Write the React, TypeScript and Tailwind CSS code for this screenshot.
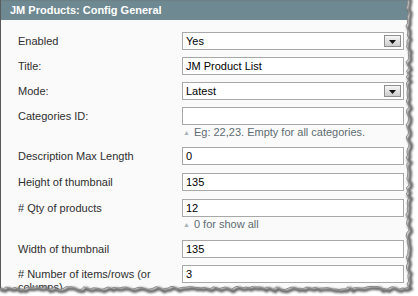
import React from "react";

type Field = {
  label: string;
  value: string;
  select?: boolean;
  hint?: string;
  extra?: string;
};

const FIELDS: Field[] = [
  { label: "Enabled", value: "Yes", select: true },
  { label: "Title:", value: "JM Product List" },
  { label: "Mode:", value: "Latest", select: true },
  { label: "Categories ID:", value: "", hint: "Eg: 22,23. Empty for all categories." },
  { label: "Description Max Length", value: "0" },
  { label: "Height of thumbnail", value: "135", extra: "mt-[1px]" },
  { label: "# Qty of products", value: "12", hint: "0 for show all", extra: "mt-[1px]" },
  { label: "Width of thumbnail", value: "135", extra: "mt-[1px]" },
  { label: "# Number of items/rows (or columns)", value: "3" },
];

// deterministic jitter for the torn paper edge
const rnd = (i: number) => {
  const s = Math.sin(i * 12.9898 + 78.233) * 43758.5453;
  return s - Math.floor(s);
};

function tornEdge() {
  const pts: string[] = [];
  for (let y = -4, i = 0; y <= 287; y += 3, i++) {
    pts.push(`${(407.5 + (rnd(i) - 0.5) * 3.4).toFixed(1)},${y}`);
  }
  for (let x = 405, i = 200; x >= -4; x -= 3, i++) {
    pts.push(`${x},${(288 + (rnd(i) - 0.5) * 3.4).toFixed(1)}`);
  }
  return pts;
}

function SelectArrow() {
  return (
    <div className="absolute right-[2px] top-[2px] w-[17px] h-[12px] border border-[#8f8f8f] bg-gradient-to-b from-[#f7f7f7] to-[#cdcdcd] flex items-end justify-center pb-[2px]">
      <svg width="7" height="4" viewBox="0 0 7 4">
        <path d="M0 0H7L3.5 4Z" fill="#111" />
      </svg>
    </div>
  );
}

function Row({ f }: { f: Field }) {
  return (
    <div className={`flex items-start ${f.extra ?? ""}`}>
      <label className="w-[150px] pt-[3px] text-[11px] leading-[13px] text-[#2f2f2f]">{f.label}</label>
      <div className="ml-[14px] w-[222px]">
        <div className="relative h-[18px] border border-[#a8a8a8] bg-white px-[3px] text-[11px] leading-[16px] text-black">
          {f.value}
          {f.select && <SelectArrow />}
        </div>
        {f.hint && (
          <div className="flex items-center gap-[4px] pl-[1px] h-[15px] text-[11px] leading-[13px] text-[#5e6c72]">
            <span className="text-[7px] text-[#a9b4b8]">▲</span>
            {f.hint}
          </div>
        )}
      </div>
    </div>
  );
}

export default function App() {
  const edge = tornEdge();
  const outside = `M418,-10 L-10,-10 L-10,-4 ${edge.map((p) => "L" + p).join(" ")} L-10,296 L-10,310 L430,310 L430,-10 Z`;
  const inside = `M-10,-4 L${edge.join(" L")}`;

  return (
    <div
      className="relative w-[418px] h-[296px] overflow-hidden bg-white"
      style={{ fontFamily: '"Liberation Sans", Arial, sans-serif' }}
    >
      <div className="w-[412px] h-[300px] border-l border-[#5a5a5a] bg-[#fafafa]">
        <div className="h-[20px] bg-[#6f8992] pl-[9px] text-[11px] font-bold leading-[20px] text-white">
          JM Products: Config General
        </div>
        <div className="pl-[17px] pt-[12px] flex flex-col gap-[7px]">
          {FIELDS.map((f) => (
            <Row key={f.label} f={f} />
          ))}
        </div>
      </div>

      {/* torn paper edge with shadow */}
      <svg className="absolute inset-0" width="418" height="296" viewBox="0 0 418 296">
        <defs>
          <filter id="soft" x="-10%" y="-10%" width="120%" height="120%">
            <feGaussianBlur stdDeviation="0.9" />
          </filter>
        </defs>
        <path d={outside} fill="#fff" fillRule="evenodd" />
        <path d={inside} fill="none" stroke="#5e5e5e" strokeWidth="3.2" transform="translate(2.5,2)" filter="url(#soft)" />
        <path d={inside} fill="none" stroke="#8a8a8a" strokeWidth="1" />
      </svg>
    </div>
  );
}
